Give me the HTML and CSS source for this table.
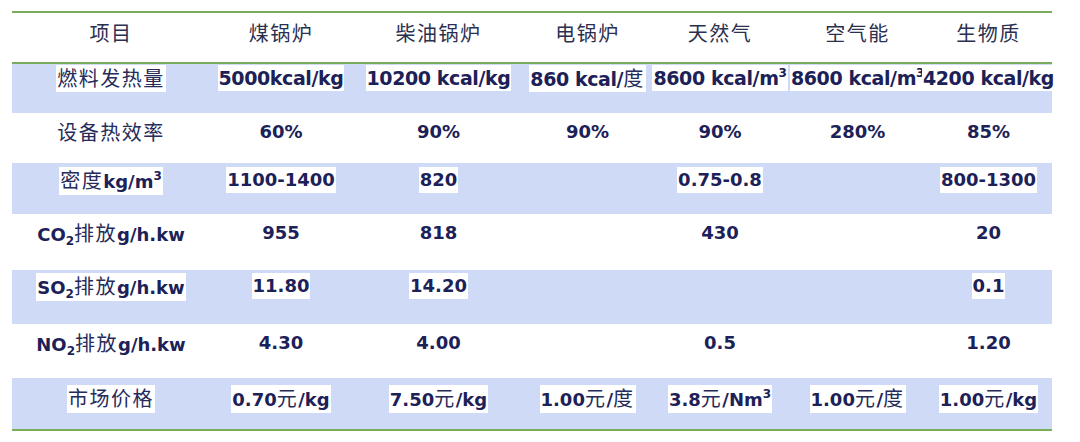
FILE: index.html
```html
<!DOCTYPE html>
<html lang="zh">
<head>
<meta charset="utf-8">
<title>锅炉燃料对比</title>
<link rel="stylesheet" href="styles.css">
</head>
<body>
<table class="cmp">
  <colgroup>
    <col class="c1"><col class="c2"><col class="c3"><col class="c4"><col class="c5"><col class="c6"><col class="c7">
  </colgroup>
  <thead>
    <tr class="rh">
      <th><div class="cell"><span class="zh">项目</span></div></th>
      <th><div class="cell"><span class="zh">煤锅炉</span></div></th>
      <th><div class="cell"><span class="zh">柴油锅炉</span></div></th>
      <th><div class="cell"><span class="zh">电锅炉</span></div></th>
      <th><div class="cell"><span class="zh">天然气</span></div></th>
      <th><div class="cell"><span class="zh">空气能</span></div></th>
      <th><div class="cell"><span class="zh">生物质</span></div></th>
    </tr>
  </thead>
  <tbody>
    <tr class="r1 alt">
      <td><div class="cell"><span class="hl"><span class="zh">燃料发热量</span></span></div></td>
      <td><div class="cell"><span class="hl">5000kcal/kg</span></div></td>
      <td><div class="cell"><span class="hl">10200 kcal/kg</span></div></td>
      <td><div class="cell"><span class="hl">860 kcal/<span class="zh">度</span></span></div></td>
      <td><div class="cell"><span class="hl">8600 kcal/m<sup>3</sup></span></div></td>
      <td><div class="cell"><span class="hl">8600 kcal/m<sup>3</sup></span></div></td>
      <td><div class="cell"><span class="hl">4200 kcal/kg</span></div></td>
    </tr>
    <tr class="r2">
      <td><div class="cell"><span class="hl"><span class="zh">设备热效率</span></span></div></td>
      <td><div class="cell"><span class="hl">60%</span></div></td>
      <td><div class="cell"><span class="hl">90%</span></div></td>
      <td><div class="cell"><span class="hl">90%</span></div></td>
      <td><div class="cell"><span class="hl">90%</span></div></td>
      <td><div class="cell"><span class="hl">280%</span></div></td>
      <td><div class="cell"><span class="hl">85%</span></div></td>
    </tr>
    <tr class="r3 alt">
      <td><div class="cell"><span class="hl"><span class="zh">密度</span>kg/m<sup>3</sup></span></div></td>
      <td><div class="cell"><span class="hl">1100-1400</span></div></td>
      <td><div class="cell"><span class="hl">820</span></div></td>
      <td><div class="cell"></div></td>
      <td><div class="cell"><span class="hl">0.75-0.8</span></div></td>
      <td><div class="cell"></div></td>
      <td><div class="cell"><span class="hl">800-1300</span></div></td>
    </tr>
    <tr class="r4">
      <td><div class="cell"><span class="hl">CO<sub>2</sub><span class="zh">排放</span>g/h.kw</span></div></td>
      <td><div class="cell"><span class="hl">955</span></div></td>
      <td><div class="cell"><span class="hl">818</span></div></td>
      <td><div class="cell"></div></td>
      <td><div class="cell"><span class="hl">430</span></div></td>
      <td><div class="cell"></div></td>
      <td><div class="cell"><span class="hl">20</span></div></td>
    </tr>
    <tr class="r5 alt">
      <td><div class="cell"><span class="hl">SO<sub>2</sub><span class="zh">排放</span>g/h.kw</span></div></td>
      <td><div class="cell"><span class="hl">11.80</span></div></td>
      <td><div class="cell"><span class="hl">14.20</span></div></td>
      <td><div class="cell"></div></td>
      <td><div class="cell"></div></td>
      <td><div class="cell"></div></td>
      <td><div class="cell"><span class="hl">0.1</span></div></td>
    </tr>
    <tr class="r6">
      <td><div class="cell"><span class="hl">NO<sub>2</sub><span class="zh">排放</span>g/h.kw</span></div></td>
      <td><div class="cell"><span class="hl">4.30</span></div></td>
      <td><div class="cell"><span class="hl">4.00</span></div></td>
      <td><div class="cell"></div></td>
      <td><div class="cell"><span class="hl">0.5</span></div></td>
      <td><div class="cell"></div></td>
      <td><div class="cell"><span class="hl">1.20</span></div></td>
    </tr>
    <tr class="r7 alt">
      <td><div class="cell"><span class="hl"><span class="zh">市场价格</span></span></div></td>
      <td><div class="cell"><span class="hl">0.70<span class="zh">元</span>/kg</span></div></td>
      <td><div class="cell"><span class="hl">7.50<span class="zh">元</span>/kg</span></div></td>
      <td><div class="cell"><span class="hl">1.00<span class="zh">元</span>/<span class="zh">度</span></span></div></td>
      <td><div class="cell"><span class="hl">3.8<span class="zh">元</span>/Nm<sup>3</sup></span></div></td>
      <td><div class="cell"><span class="hl">1.00<span class="zh">元</span>/<span class="zh">度</span></span></div></td>
      <td><div class="cell"><span class="hl">1.00<span class="zh">元</span>/kg</span></div></td>
    </tr>
  </tbody>
</table>
</body>
</html>
```

FILE: styles.css
```css
html, body {
  margin: 0;
  padding: 0;
  background: #ffffff;
}

.cmp {
  margin: 11px 0 0 12px;
  width: 1040px;
  table-layout: fixed;
  border-collapse: separate;
  border-spacing: 0;
  font-family: "DejaVu Sans", "Noto Sans CJK SC", sans-serif;
  font-weight: 700;
  font-size: 18px;
  color: #1c2157;
}

.c1 { width: 198px; }
.c2 { width: 142px; }
.c3 { width: 173px; }
.c4 { width: 125px; }
.c5 { width: 140px; }
.c6 { width: 135px; }
.c7 { width: 127px; }

.cmp th,
.cmp td {
  padding: 0;
  vertical-align: top;
}

.cmp th {
  border-top: 2px solid #78ad5c;
  border-bottom: 2px solid #78ad5c;
  font-weight: 400;
}

.cmp tr.r7 td {
  border-bottom: 2px solid #78ad5c;
}

.alt td {
  background: #cfdaf6;
}

.cell {
  display: flex;
  justify-content: center;
  align-items: flex-start;
  white-space: nowrap;
  box-sizing: border-box;
}

.hl {
  line-height: 26px;
  padding: 0 1px;
}

.alt .hl {
  background: #ffffff;
}

.r1 .hl {
  font-size: 19px;
  letter-spacing: -0.4px;
}

.zh {
  font-family: "Noto Sans CJK SC", sans-serif;
  font-weight: 400;
  font-size: 20px;
  letter-spacing: 1.5px;
  color: #262b5a;
}

.rh .zh {
  color: #2b2f50;
}

sub, sup {
  font-size: 12px;
  line-height: 0;
}

sub { vertical-align: -4px; }
sup { vertical-align: 8px; }

.rh .cell { height: 49px; padding-top: 5px; }
.r1 .cell { height: 49px; padding-top: 1px; }
.r2 .cell { height: 50px; padding-top: 6px; }
.r3 .cell { height: 51px; padding-top: 4px; }
.r4 .cell { height: 56px; padding-top: 6px; }
.r5 .cell { height: 54px; padding-top: 3px; }
.r6 .cell { height: 54px; padding-top: 6px; }
.r7 .cell { height: 51px; padding-top: 7px; }
```
